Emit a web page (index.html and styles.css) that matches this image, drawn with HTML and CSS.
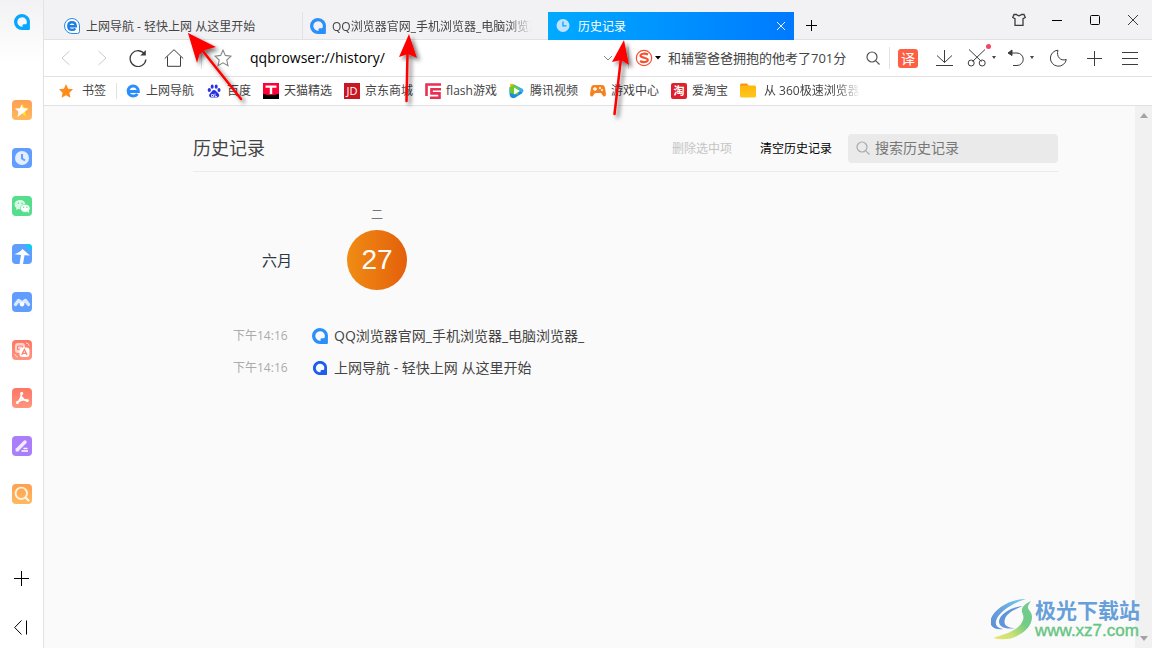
FILE: index.html
```html
<!DOCTYPE html>
<html lang="zh-CN">
<head>
<meta charset="utf-8">
<title>历史记录</title>
<link rel="stylesheet" href="styles.css">
</head>
<body>
<svg class="defs" aria-hidden="true">
  <defs>
    <linearGradient id="orange" x1="0" y1="0" x2="0" y2="1"><stop offset="0" stop-color="#ff9f52"/><stop offset="1" stop-color="#ffb95e"/></linearGradient>
    <linearGradient id="coral" x1="0" y1="0" x2="0" y2="1"><stop offset="0" stop-color="#ff7663"/><stop offset="1" stop-color="#ff9580"/></linearGradient>
    <linearGradient id="folder" x1="0" y1="0" x2="0" y2="1"><stop offset="0" stop-color="#ffb70f"/><stop offset="1" stop-color="#ffc61a"/></linearGradient>
    <linearGradient id="swirl" x1="0" y1="1" x2="1" y2="0"><stop offset="0" stop-color="#5b8ed6"/><stop offset=".5" stop-color="#6aa3de"/><stop offset="1" stop-color="#70d0f2"/></linearGradient>
    <linearGradient id="leaf" x1="0" y1="1" x2="1" y2="0"><stop offset="0" stop-color="#e9e572"/><stop offset=".3" stop-color="#c9e274"/><stop offset=".6" stop-color="#72cb86"/><stop offset="1" stop-color="#74cb92"/></linearGradient>
    <filter id="shade" x="-50%" y="-50%" width="200%" height="200%"><feDropShadow dx="3" dy="3" stdDeviation="2" flood-color="#000" flood-opacity=".55"/></filter>
    <symbol id="q" viewBox="0 0 16 16"><path fill="currentColor" fill-rule="evenodd" d="M8 0a8 8 0 0 1 7.900 9.200v5.300c0 1-.4 1.500-1.400 1.500H8A8 8 0 0 1 8 0zm0 3.300A4.700 4.700 0 1 0 9 12.600c-1-1-.5-2.200 .6-2.400 .8-.2 1.400.2 2.600 .1A4.700 4.700 0 0 0 8 3.300z"/></symbol>
    <symbol id="e" viewBox="0 0 16 16"><path fill="none" stroke="currentColor" stroke-width="3" d="M3.500 8.500h9.800C13.200 5 11 3 8.200 3 5 3 3.200 5.200 3.200 8S5 13 8.200 13c2 0 3.400-.7 4.300-2"/></symbol>
    <symbol id="star" viewBox="0 0 16 16"><path d="M8 1l2.100 4.700 5 .6-3.700 3.500 1 5L8 12.300 3.600 14.800l1-5L.9 6.300l5-.6z"/></symbol>
    <symbol id="lens" viewBox="0 0 16 16"><g fill="none" stroke="currentColor" stroke-width="1.200"><circle cx="7" cy="7" r="5"/><path d="M10.600 10.600l3.900 3.900"/></g></symbol>
  </defs>
</svg>

<div class="browser">
  <nav class="sidebar" aria-label="侧边栏">
    <span class="logo"><svg class="i16 sky"><use href="#q"/></svg></span>
    <div class="apps">
      <button aria-label="收藏"><svg class="app" viewBox="0 0 20 20"><rect width="20" height="20" rx="4" fill="url(#orange)"/><path d="M10 3.500l2 4 4 .7-3 3 1 5.300-4-3z" fill="#ffee00"/><path d="M9.500 4.500L11 8.300l5.300.5-4.800 3.900L5.500 17l1-5.200L3 8.600l5-.3z" fill="#fff"/></svg></button>
      <button aria-label="历史"><svg class="app" viewBox="0 0 20 20"><rect width="20" height="20" rx="4" fill="#609dff"/><circle cx="10" cy="10" r="7" fill="#e4eeff"/><path d="M10 6v4.500l3 2" fill="none" stroke="#609dff" stroke-width="2"/></svg></button>
      <button aria-label="微信"><svg class="app" viewBox="0 0 20 20"><rect width="20" height="20" rx="4" fill="#55df8c"/><path d="M8 4C4.500 4 2.500 6.200 2.500 8.500c0 1.500.8 2.700 1.900 3.500L4 14l2-1.100 2 .3c3.300 0 5.400-2 5.400-4.700S11.200 4 8 4z" fill="#d9f9e5"/><ellipse cx="13.200" cy="12.300" rx="4.800" ry="4" fill="#fff" stroke="#55df8c" stroke-width=".7"/><path d="M15 15l2 2v-3z" fill="#fff"/><g fill="#55df8c"><circle cx="6.300" cy="7.300" r=".8"/><circle cx="10" cy="7.300" r=".8"/><circle cx="11.700" cy="11.200" r=".7"/><circle cx="14.900" cy="11.200" r=".7"/></g></svg></button>
      <button aria-label="应用"><svg class="app" viewBox="0 0 20 20"><rect width="20" height="20" rx="4" fill="#5f9dff"/><path d="M13 0h3a4 4 0 0 1 4 4v2c-4 0-6-2-7-6z" fill="#12c9f4"/><path d="M10.500 5L18 11.500l-5.500-.3L11 20H7.500L9 11l-6.500-.8c3-1 6-2.700 8-5.200z" fill="#fff"/></svg></button>
      <button aria-label="会议"><svg class="app" viewBox="0 0 20 20"><rect width="20" height="20" rx="4" fill="#609dff"/><path d="M3.500 12.500l3-4 3.500 2.500 3.500-2.500 3 4" fill="none" stroke="#dbe9ff" stroke-width="3.400" stroke-linecap="round" stroke-linejoin="round"/><circle cx="10" cy="12.300" r="2.200" fill="#fff"/></svg></button>
      <button aria-label="翻译"><svg class="app" viewBox="0 0 20 20"><rect width="20" height="20" rx="4" fill="url(#coral)"/><rect x="3" y="3" width="10" height="10" rx="3" fill="#ffd5ce"/><path d="M5.500 6h5v3.500h-5z" fill="none" stroke="#ff816e"/><rect x="7.500" y="7.500" width="10" height="9.500" rx="3" fill="#fff"/><path d="M9.700 15l2.700-5.500L15 15M10.700 13.400h3.500" fill="none" stroke="#ff816e" stroke-width="1.300"/><path d="M14 3q3 0 3.200 3M3 14q.5 3 3 3" fill="none" stroke="#ffd5ce"/></svg></button>
      <button aria-label="PDF"><svg class="app" viewBox="0 0 20 20"><rect width="20" height="20" rx="4" fill="url(#coral)"/><path d="M9.500 5.500c0 4-1.500 7-4.300 9.200M10 9.500c1 2 3 3 5.300 3M6.500 13.500c2-1.300 4.500-2 7-1.700" fill="none" stroke="#fff" stroke-width="1.800" stroke-linecap="round"/><circle cx="9.700" cy="5.200" r="1.500" fill="#fff"/><circle cx="5.400" cy="14.500" r="1.500" fill="#fff"/><circle cx="15.300" cy="12.400" r="1.500" fill="#fff"/></svg></button>
      <button aria-label="笔记"><svg class="app" viewBox="0 0 20 20"><rect width="20" height="20" rx="4" fill="#aa7dfa"/><path d="M5.500 13.500L13 6" stroke="#f3ecff" stroke-width="3.400" stroke-linecap="round"/><path d="M3.800 12l-.2 3.500 3.600-.2z" fill="#f3ecff"/><path d="M11.500 12.500h4M9.500 15h6.500" stroke="#fff" stroke-width="1.400"/></svg></button>
      <button aria-label="搜索"><svg class="app" viewBox="0 0 20 20"><rect width="20" height="20" rx="4" fill="url(#orange)"/><circle cx="9.300" cy="9.300" r="5.700" fill="none" stroke="#fff2df" stroke-width="1.900"/><path d="M13.500 13.500l3 3" stroke="#fff2df" stroke-width="2.200" stroke-linecap="round"/></svg></button>
    </div>
    <div class="side-tools">
      <button aria-label="添加"><svg class="i16 line black" viewBox="0 0 16 16"><path d="M7.500 0v15M0 7.500h15"/></svg></button>
      <button aria-label="收起"><svg class="i16 line black" viewBox="0 0 16 16"><path d="M7.500 .5L.7 7.500l6.800 7M12.500 .5v14"/></svg></button>
    </div>
  </nav>

  <div class="main">
    <header class="titlebar">
      <div class="tabs">
        <a class="tab" href="#"><svg class="i16" viewBox="0 0 16 16"><path d="M15.500 8v5.500q0 2-2 2H8A7.500 7.500 0 1 1 15.500 8z" fill="#fff" stroke="#2a88e8"/><path fill="none" stroke="#1e7fe4" stroke-width="2.400" d="M5 8.300h6.800C11.700 5.700 10.100 4.300 8 4.300 5.700 4.300 4.300 6 4.300 8.200S5.700 11.900 8.200 11.900c1.300 0 2.400-.5 3.100-1.400"/></svg><span>上网导航 - 轻快上网 从这里开始</span></a>
        <a class="tab" href="#"><svg class="i16 blue"><use href="#q"/></svg><span class="fade">QQ浏览器官网_手机浏览器_电脑浏览器</span></a>
        <div class="tab active"><svg class="i16" viewBox="0 0 16 16"><circle cx="7" cy="7.500" r="6.500" fill="#bfe3ff"/><path d="M7 3.500v4.300h3.500" fill="none" stroke="#08a2ff" stroke-width="1.300"/></svg><span>历史记录</span><button aria-label="关闭标签"><svg class="close" viewBox="0 0 8 8"><path d="M0 0l8 8M8 0L0 8"/></svg></button></div>
        <button class="newtab" aria-label="新标签页"><svg class="i12 line black" viewBox="0 0 12 12"><path d="M5.500 0v11M0 5.500h11"/></svg></button>
      </div>
      <div class="window-controls">
        <button aria-label="皮肤"><svg class="i14 line dark bold" viewBox="0 0 14 14"><path d="M4.500 1.500H2L.7 4.500l2.300 1.200v6.600h8V5.700l2.300-1.200L12 1.500H9.500Q7 4 4.500 1.500z"/></svg></button>
        <button aria-label="最小化"><svg class="i12 line black" viewBox="0 0 12 12"><path d="M1 6.500h10"/></svg></button>
        <button aria-label="最大化"><svg class="i12 line black" viewBox="0 0 12 12"><rect x="1.500" y="1.500" width="9" height="9" rx="1"/></svg></button>
        <button aria-label="关闭"><svg class="i12 line dark" viewBox="0 0 12 12"><path d="M1 1l10 10M11 1L1 11"/></svg></button>
      </div>
    </header>

    <div class="toolbar">
      <button class="tool" aria-label="后退"><svg class="i16 line pale" viewBox="0 0 16 16"><path d="M11.500 1L4 8l7.500 7"/></svg></button>
      <button class="tool" aria-label="前进"><svg class="i16 line pale" viewBox="0 0 16 16"><path d="M4.500 1L12 8l-7.500 7"/></svg></button>
      <button class="tool" aria-label="刷新"><svg class="i18 line dark bold" viewBox="0 0 18 18"><path d="M15.800 5.500A7.900 7.900 0 1 0 16.900 10.500"/><path d="M16.800 1v5.500h-5.500z" fill="currentColor" stroke="none"/></svg></button>
      <button class="tool" aria-label="主页"><svg class="i20 line dark" viewBox="0 0 20 20"><path d="M.8 10.500L10 1.700l9.200 8.800M3.500 8.500v9.800h13V8.500"/></svg></button>
      <i class="rule first"></i>
      <button class="tool narrow" aria-label="收藏此页"><svg class="i18 outline"><use href="#star"/></svg></button>
      <input class="url" aria-label="地址" value="qqbrowser://history/">
      <button class="drop" aria-label="展开地址"><svg class="i12 line gray" viewBox="0 0 12 12"><path d="M2 4l4 4 4-4"/></svg></button>
      <i class="rule"></i>
      <div class="search">
        <svg class="i18" viewBox="0 0 18 18"><circle cx="9" cy="9" r="7.700" fill="#fff" stroke="#f75030" stroke-width="1.200"/><path d="M13 5.500C10 4 5.500 4.500 5.500 6.800S13 8.500 12.800 11 7.500 13.500 5 12" fill="none" stroke="#f75030" stroke-width="2.200"/></svg>
        <svg class="caret black" viewBox="0 0 6 4"><path d="M0 0h6L3 3.500z"/></svg>
        <input aria-label="搜索" value="和辅警爸爸拥抱的他考了701分">
        <button aria-label="搜索"><svg class="i16 gray-d"><use href="#lens"/></svg></button>
      </div>
      <i class="rule"></i>
      <button class="tool" aria-label="翻译"><span class="translate">译</span></button>
      <button class="tool" aria-label="下载"><svg class="i18 line dark" viewBox="0 0 18 18"><path d="M9.500 1v12.500M2 6.500l7.500 7 7.500-7M1 16.500h17"/></svg></button>
      <button class="tool wide" aria-label="截图"><svg class="i20 line dark" viewBox="0 0 20 20"><path d="M2 1.500l12.500 12M18 1.500l-12.500 12"/><circle cx="4.200" cy="15" r="3"/><circle cx="15.200" cy="15" r="3"/></svg><svg class="caret" viewBox="0 0 6 4"><path d="M1 0h4L3 3z"/></svg><i class="dot"></i></button>
      <button class="tool wide" aria-label="撤销"><svg class="i18 line dark" viewBox="0 0 18 18"><path d="M2 4h8a6 6 0 0 1 0 12.500H6"/><path d="M5 1L1 4l4 2.500z" fill="currentColor"/></svg><svg class="caret" viewBox="0 0 6 4"><path d="M1 0h4L3 3z"/></svg></button>
      <button class="tool" aria-label="夜间模式"><svg class="i18 line dark" viewBox="0 0 18 18"><path d="M9 1.200a8 8 0 1 0 8.300 9.300C11.500 12.500 7 7.500 9 1.200z"/></svg></button>
      <button class="tool" aria-label="添加"><svg class="i16 line dark" viewBox="0 0 16 16"><path d="M8.500 1v15M1 8.500h15"/></svg></button>
      <button class="tool" aria-label="菜单"><svg class="i16 line dark" viewBox="0 0 16 16"><path d="M0 2.500h16M0 8.500h16M0 14.500h16"/></svg></button>
    </div>

    <nav class="bookmarks" aria-label="书签栏">
      <a class="lead" href="#"><svg class="i16 amber"><use href="#star"/></svg>书签</a>
      <a href="#"><svg class="i16 blue"><use href="#e"/></svg>上网导航</a>
      <a href="#"><svg class="i16" viewBox="0 0 16 16" fill="#2932e1"><ellipse cx="3.300" cy="7" rx="1.600" ry="2.100"/><ellipse cx="6.200" cy="3.700" rx="1.500" ry="2.100"/><ellipse cx="10.200" cy="3.700" rx="1.500" ry="2.100"/><ellipse cx="13" cy="7" rx="1.500" ry="2.100"/><path d="M8 7c-2 0-2.200 2-3.700 3.200-2.400 2-.7 4.500 1.700 4.300h4.700c2.600 0 3.400-2.800 1.300-4.500C10.500 9 10 7 8 7z"/><path d="M5.500 11.500h2v2h-2zM9 10.500v3h2" fill="none" stroke="#fff" stroke-width=".8"/></svg>百度</a>
      <a href="#"><svg class="i16" viewBox="0 0 16 16"><path d="M0 0h16v16H0z" fill="#ff0036"/><path d="M0 11q8 2 16 0v5H0z"/><path d="M2.500 2.500h11v2.200H9.200V11H6.800V4.700H2.500z" fill="#fff"/></svg>天猫精选</a>
      <a href="#"><span class="jd">JD</span>京东商城</a>
      <a href="#"><svg class="i16" viewBox="0 0 16 16"><path d="M16 1.500H1.500V13M16 6.200H6.500v4.200h8v4.300H5" fill="none" stroke="#e93052" stroke-width="2.600"/></svg>flash游戏</a>
      <a href="#"><svg class="i16" viewBox="0 0 16 16"><path d="M1 1.500Q2 0 5 1.500l4 3-6 9z" fill="#ffb000"/><path d="M4 1l9 4.500q3 2 0 4.500l-3 2z" fill="#35b2ee"/><path d="M.5 4Q0 12 1.500 14q2 2 5 .5l7-4.500-4-3z" fill="#188ce8"/><path d="M1 4v6l8 2 1-7-5-3z" fill="#6acb22"/><path d="M5 4.500v7L11 8z" fill="#fff"/></svg>腾讯视频</a>
      <a href="#"><svg class="i16" viewBox="0 0 16 16"><path d="M4 2h8q2.500 0 3 3l1 6q0 3-2.500 2.500L11 10H5l-2.500 3.500Q0 14 0 11l1-6q.5-3 3-3z" fill="#f58220"/><path d="M5 4v4M3 6h4" stroke="#fff" stroke-width="1.300"/><circle cx="10" cy="5" r="1" fill="#fff"/><circle cx="12" cy="7" r="1" fill="#fff"/></svg>游戏中心</a>
      <a href="#"><span class="tao">淘</span>爱淘宝</a>
      <a href="#"><svg class="i16" viewBox="0 0 16 16"><path d="M0 2q0-1.500 1.500-1.500H7L9 3H0z" fill="#ff8f17"/><path d="M0 2.500h14.500Q16 2.500 16 4v9q0 1.500-1.500 1.500h-13Q0 14.500 0 13z" fill="url(#folder)"/></svg><span class="long fade">从 360极速浏览器</span></a>
    </nav>

    <div class="viewport">
      <main class="history">
        <div class="head">
          <h1>历史记录</h1>
          <button class="del" disabled>删除选中项</button>
          <button class="clear">清空历史记录</button>
          <label class="find"><svg class="i16"><use href="#lens"/></svg><input type="search" placeholder="搜索历史记录" aria-label="搜索历史记录"></label>
        </div>
        <div class="calendar">
          <span class="month">六月</span>
          <div class="day"><span>二</span><button>27</button></div>
        </div>
        <ul class="list">
          <li><time>下午14:16</time><a href="#"><svg class="i16 blue"><use href="#q"/></svg>QQ浏览器官网_手机浏览器_电脑浏览器_</a></li>
          <li><time>下午14:16</time><a href="#"><svg class="i16 navy" viewBox="-1 -1 18 18"><use href="#q" width="16" height="16"/></svg>上网导航 - 轻快上网 从这里开始</a></li>
        </ul>
      </main>
      <div class="scrollbar"><svg class="thumb-arrow" viewBox="0 0 8 5"><path d="M0 5h8L4 0z"/></svg><svg class="thumb-arrow" viewBox="0 0 8 5"><path d="M0 0h8L4 5z"/></svg></div>
    </div>
  </div>

  <div class="watermark">
    <svg class="mark" viewBox="0 0 44 42"><path d="M35 0C18 0 2 11-.5 21c-1.500 7 5 10 12.500 9-5-1-8-3-7-8C7 14 19 5 35 0z" fill="url(#swirl)"/><path d="M32 7C20 8 9 15 8 22c-.5 6 7 9 16 7-6 0-11-2-10.500-7C14 16 21 11 32 7z" fill="#5f94d8"/><path d="M40 2c-6 3-10 6-9 11 1 3 2 4 1 8-2 7-10 11-18 14-4 1.500-8 2.500-12 4 8 2 16 1.500 22-1 11-5 17-12 17-20 0-5-3-6-4-9-.5-2 1-4 3-7z" fill="url(#leaf)"/></svg>
    <div><b>极光下载站</b><span>www.xz7.com</span></div>
  </div>

  <svg class="arrows" viewBox="0 0 1152 130" aria-hidden="true">
    <g filter="url(#shade)" fill="#f00" stroke="#f00" stroke-linecap="round">
      <path d="M241 99L202 50" stroke-width="2.500"/><path d="M188 33l20 12-4 4.500-4 5z" stroke="none"/><path d="M188 33l28 14-11 3-5 3-3 10z" stroke="none"/>
      <path d="M406.500 101l1-48" stroke-width="2.500"/><path d="M409 34l8 24-9-4-9 3z" stroke="none"/>
      <path d="M614.500 114l6.500-56" stroke-width="2.500"/><path d="M624 40l5 25-8-5-9 2z" stroke="none"/>
    </g>
  </svg>
</div>
</body>
</html>
```
FILE: styles.css
```css
* { box-sizing: border-box; }
body { margin: 0; font: 12px/16px "Open Sans", "Noto Sans CJK SC", sans-serif; color: #444; }
button { border: 0; padding: 0; background: none; font: inherit; color: inherit; display: flex; align-items: center; justify-content: center; }
input { border: 0; padding: 0; background: none; font: inherit; color: inherit; outline: 0; min-width: 0; }
a { color: inherit; text-decoration: none; }
svg { display: block; flex: none; }
.defs { position: absolute; width: 0; height: 0; }

.i12 { width: 12px; height: 12px; }
.i14 { width: 14px; height: 14px; }
.i16 { width: 16px; height: 16px; }
.i18 { width: 18px; height: 18px; }
.i20 { width: 20px; height: 20px; }
.line { fill: none; stroke: currentColor; stroke-width: 1; }
.bold { stroke-width: 1.3; }
.black { color: #000; }
.dark { color: #3c3c3c; }
.pale { color: #ccc; }
.gray { color: #888; }
.gray-d { color: #555; }
.sky { color: #06a7ff; }
.blue { color: #2a8ffa; }
.navy { color: #1f5cf0; }
.amber { fill: #ff8c1a; }
.outline { fill: none; stroke: #888; stroke-width: 1; }
.caret { width: 6px; height: 4px; fill: currentColor; }
.fade { mask-image: linear-gradient(to right, #000 calc(100% - 24px), transparent); }

.browser { position: relative; display: flex; min-height: 100vh; overflow: hidden; }

.sidebar { width: 44px; flex: none; display: flex; flex-direction: column; border-right: 1px solid #e2e2e2; background: linear-gradient(#f2f2f4, #fff 64px); }
.logo { height: 44px; display: flex; align-items: center; justify-content: center; margin-bottom: 42px; }
.apps button { width: 100%; height: 48px; }
.app { width: 20px; height: 20px; }
.side-tools { margin-top: auto; display: flex; flex-direction: column; gap: 8px; }
.side-tools button { width: 100%; height: 41px; }

.main { flex: 1; min-width: 0; display: flex; flex-direction: column; }
.titlebar { height: 40px; display: flex; justify-content: space-between; background: #f2f2f4; border-bottom: 1px solid #e2e2e2; }
.tabs { display: flex; align-items: flex-end; padding-left: 12px; height: 40px; flex: 1; min-width: 0; }
.tab { flex: 0 1 246px; min-width: 0; height: 28px; padding: 0 16px 0 8px; display: flex; align-items: center; gap: 6px; white-space: nowrap; }
.tab span { flex: 1; overflow: hidden; padding-top: 2px; }
.tab + .tab { padding-left: 7px; border-left: 1px solid #e2e2e2; }
.tab.active { border: 0; padding: 0 8px; color: #fff; background: linear-gradient(to right, #00aaff, #007aff); }
.tab button { width: 10px; height: 16px; }
.close { width: 8px; height: 8px; stroke: #fff; fill: none; }
.newtab { width: 36px; height: 28px; }
.window-controls { display: flex; }
.window-controls button { width: 38px; height: 40px; }

.toolbar { height: 37px; display: flex; align-items: center; padding: 0 4px; background: #fff; border-bottom: 1px solid #e2e2e2; }
.tool { width: 36px; height: 36px; flex: none; }
.tool.wide { position: relative; width: 39px; gap: 4px; }
.tool.narrow { width: 30px; }
.dot { position: absolute; top: 4px; right: 10px; width: 5px; height: 5px; border-radius: 50%; background: #f5475b; }
.rule { flex: none; width: 1px; height: 22px; background: #e2e2e2; }
.rule.first { margin: 0 6px 0 9px; }
.url { flex: 1; margin-left: 12px; font-size: 14px; line-height: 20px; color: #000; }
.drop { width: 24px; height: 24px; margin: 0 8px 0 12px; }
.search { display: flex; align-items: center; gap: 2px; width: 260px; padding: 0 6px; font-size: 13px; }
.search input { flex: 1; margin-left: 5px; }
.search button { width: 20px; height: 24px; }
.translate { width: 20px; height: 19px; border-radius: 3px; background: #ff5e43; color: #fff; font-size: 14px; line-height: 19px; }

.bookmarks { height: 29px; display: flex; align-items: center; gap: 12px; padding-left: 14px; background: #fff; border-bottom: 1px solid #e2e2e2; }
.bookmarks a { display: flex; align-items: center; gap: 5px; white-space: nowrap; }
.bookmarks .lead { gap: 8px; padding-right: 10px; border-right: 1px solid #e2e2e2; margin-right: -4px; }
.long { padding-left: 3px; }
.jd, .tao { width: 16px; height: 16px; text-align: center; color: #fff; background: #c81623; font-size: 11px; }
.tao { border-radius: 2px; background: #de1f2c; font-weight: 700; }

.viewport { flex: 1; display: flex; background: #fafafa; }
.history { flex: 1; min-width: 0; padding: 27px 77px 24px 149px; }
.head { display: flex; align-items: center; height: 39px; padding-bottom: 8px; border-bottom: 1px solid #ebebeb; }
.head h1 { flex: 1; margin: 0; font-size: 18px; line-height: 24px; font-weight: 400; }
.head button { padding-top: 2px; }
.del { color: #c4c4c4; }
.clear { margin: 0 16px 0 28px; color: #000; }
.find { display: flex; align-items: center; gap: 4px; width: 210px; height: 29px; padding: 0 7px; border-radius: 4px; background: #eaeaea; color: #aaa; font-size: 14px; }
.find input { flex: 1; }
.find input::placeholder { color: #777; opacity: 1; }
.calendar { display: flex; align-items: flex-end; gap: 55px; padding: 35px 0 0 69px; }
.month { font-size: 15px; line-height: 60px; color: #2b3744; }
.day { display: flex; flex-direction: column; align-items: center; gap: 7px; color: #777; }
.day button { width: 60px; height: 60px; border-radius: 50%; color: #fff; background: linear-gradient(to right, #f08c14, #e4600b); font: 28px/60px "Liberation Sans", Arial, sans-serif; }
.list { list-style: none; margin: 30px 0 0; padding: 0; }
.list li { display: flex; align-items: center; height: 32px; padding-left: 40px; }
.list time { width: 79px; color: #aaa; line-height: 18px; }
.list a { display: flex; align-items: center; gap: 6px; font-size: 14px; line-height: 20px; }
.scrollbar { width: 17px; display: flex; flex-direction: column; align-items: center; justify-content: space-between; padding: 7px 0; background: #f1f1f1; }
.thumb-arrow { width: 8px; height: 5px; fill: #a3a3a3; }

.watermark { position: absolute; right: 12px; bottom: 7px; display: flex; align-items: center; }
.watermark div { display: flex; flex-direction: column; }
.watermark b { font-size: 21px; line-height: 22px; color: #669fd9; }
.watermark span { font: 17px/20px "Liberation Sans", Arial, sans-serif; color: #66c583; -webkit-text-stroke: 0.4px #66c583; }
.mark { width: 44px; height: 42px; }
.arrows { position: absolute; left: 0; top: 0; width: 1152px; height: 130px; pointer-events: none; }
```
